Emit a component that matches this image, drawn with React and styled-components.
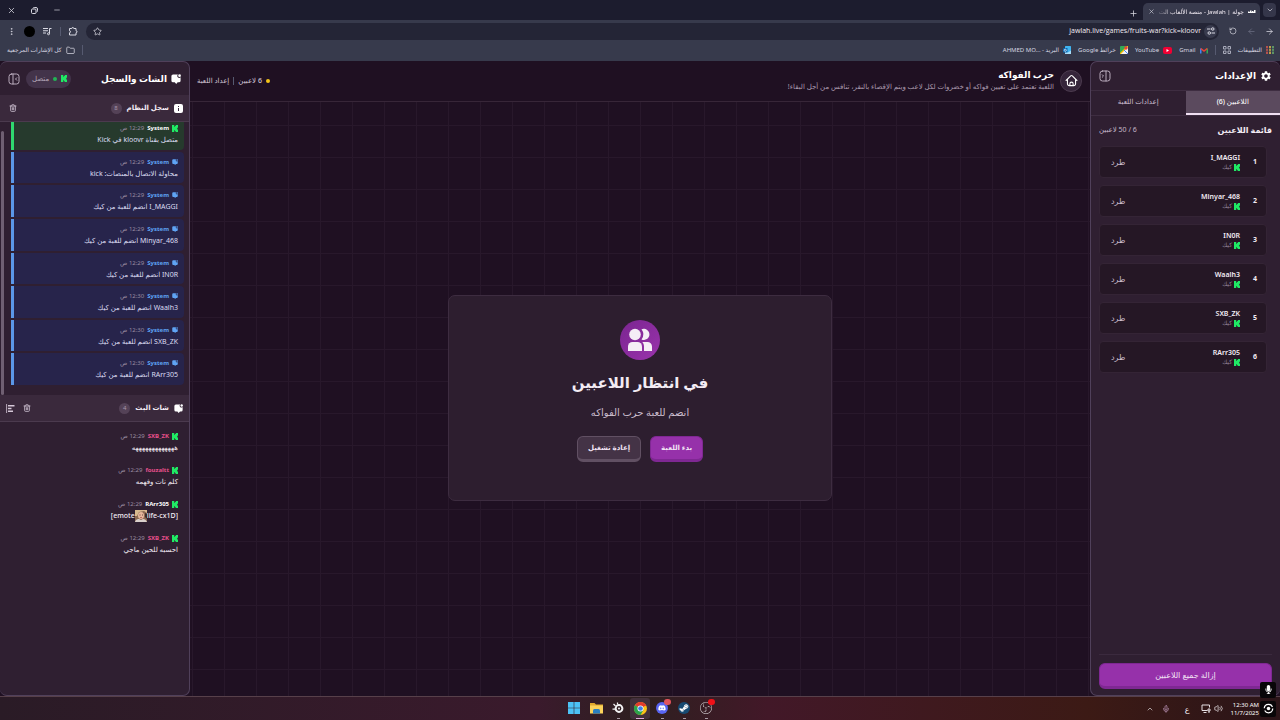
import React, { useState } from "react";
import styled, { createGlobalStyle, css } from "styled-components";
import {
  ArrowLeft,
  ArrowRight,
  ChevronDown,
  ChevronUp,
  EllipsisVertical,
  Folder,
  Mic,
  Minus,
  Plus,
  RotateCcw,
  Star,
  Trash2,
  Volume2,
  X,
} from "lucide-react";
import { MdSettings } from "react-icons/md";
import { FaDiscord, FaMicrophone, FaSteamSymbol } from "react-icons/fa";
import { SiObsstudio } from "react-icons/si";

const GlobalStyle = createGlobalStyle`
  * {
    box-sizing: border-box;
  }
  body {
    margin: 0;
    background: #1f1022;
    color: #f3ecf4;
    font-family: "Noto Sans", "DejaVu Sans", sans-serif;
    font-size: 8px;
    line-height: 12px;
  }
  button, input {
    font: inherit;
    color: inherit;
  }
  svg {
    display: block;
    flex: none;
  }
`;

/* ---------- shared ---------- */

const Page = styled.div`
  display: flex;
  flex-direction: column;
  height: 100vh;
  overflow: hidden;
`;

const IconButton = styled.button`
  display: inline-flex;
  align-items: center;
  justify-content: center;
  flex: none;
  width: ${({ $size }) => $size || 18}px;
  height: ${({ $size }) => $size || 18}px;
  padding: 0;
  border: 0;
  border-radius: 50%;
  background: ${({ $bg }) => $bg || "transparent"};
  color: ${({ $color }) => $color || "#d9d9e3"};
  cursor: pointer;
`;

const Spacer = styled.div`
  flex: 1;
`;

const Divider = styled.span`
  width: 1px;
  height: ${({ $h }) => $h || 10}px;
  margin: 0 ${({ $gap }) => $gap || 0}px;
  background: #565a70;
`;

/* ---------- browser ---------- */

const TabStrip = styled.div`
  display: flex;
  align-items: flex-end;
  height: 20px;
  padding: 0 4px 0 2px;
  background: #1c1c2e;
`;

const TabMenu = styled(IconButton)`
  align-self: center;
  width: 13px;
  height: 14px;
  border-radius: 4px;
  background: #35364a;
`;

const BrowserTab = styled.div`
  display: flex;
  align-items: center;
  gap: 4px;
  width: 117px;
  height: 17px;
  margin: 0 3px;
  padding: 0 4px;
  border-radius: 5px 5px 0 0;
  background: #383a4d;
  font-size: 6px;
`;

const TabTitle = styled.span`
  flex: 1;
  white-space: nowrap;
  mask-image: linear-gradient(to left, #000 80%, #0004);
`;

const WindowButtons = styled.div`
  display: flex;
  align-items: center;
  gap: 5px;
  height: 20px;
`;

const Toolbar = styled.div`
  display: flex;
  align-items: center;
  height: 22px;
  padding: 0 2px;
  background: #373a4c;
`;

const AddressBar = styled.form`
  display: flex;
  flex: 1;
  align-items: center;
  height: 17px;
  margin: 0 5px 0 6px;
  padding: 0 2px;
  border-radius: 9px;
  background: #242536;
`;

const AddressInput = styled.input`
  flex: 1;
  min-width: 0;
  padding: 0 3px 0 0;
  border: 0;
  outline: 0;
  background: transparent;
  font-family: "Open Sans", "Noto Sans", sans-serif;
  font-size: 7px;
  direction: ltr;
  text-align: right;
`;

const Avatar = styled(IconButton)`
  width: 11px;
  height: 11px;
  margin: 0 4px;
  background: #000;
`;

const Bookmarks = styled.nav`
  display: flex;
  align-items: center;
  gap: 7px;
  height: 19px;
  padding: 0 6px 3px 7px;
  background: #373a4c;
  color: #d5d6e0;
  font-size: 6px;
`;

const Bookmark = styled.a`
  display: flex;
  align-items: center;
  gap: 4px;
  color: inherit;
  text-decoration: none;
  white-space: nowrap;
`;

/* ---------- app layout ---------- */

const Main = styled.main`
  display: flex;
  flex: 1;
  min-height: 0;
`;

const Panel = styled.aside`
  display: flex;
  flex: 0 0 190px;
  flex-direction: column;
  min-width: 0;
  border: 1px solid #50405a;
  border-width: ${({ $side }) => ($side === "right" ? "1px 0 1px 1px" : "1px 1px 1px 0")};
  border-radius: 7px;
  background: #2f1f31;
  overflow: hidden;
`;

const PanelHeader = styled.header`
  display: flex;
  align-items: center;
  gap: 4px;
  height: ${({ $h }) => $h}px;
  padding: 0 8px;
`;

const PanelTitle = styled.h2`
  margin: 0;
  font-size: 9px;
  line-height: 16px;
  font-weight: 700;
  color: #fff;
`;

/* settings panel */

const Tabs = styled.div`
  display: grid;
  grid-template-columns: 1fr 1fr;
  border-top: 1px solid #3e2d41;
  border-bottom: 1px solid #3e2d41;
`;

const TabButton = styled.button`
  height: 24px;
  padding: 0;
  border: 0;
  border-bottom: 2px solid transparent;
  background: transparent;
  color: #cdbfd0;
  font-size: 7px;
  font-weight: 500;
  cursor: pointer;
  ${({ $active }) =>
    $active &&
    css`
      border-bottom-color: #f0dff2;
      background: #5b4a5e;
      color: #fff;
    `}
`;

const ListHeader = styled.div`
  display: flex;
  align-items: center;
  justify-content: space-between;
  height: 28px;
  padding: 0 8px;
`;

const ListTitle = styled.h3`
  margin: 0;
  font-size: 8px;
  font-weight: 700;
`;

const Count = styled.span`
  font-size: 7px;
  color: #c5b7c8;
`;

const Players = styled.ul`
  display: flex;
  flex: 1;
  flex-direction: column;
  gap: 7px;
  min-height: 0;
  margin: 0;
  padding: 2px 13px 0 8px;
  list-style: none;
`;

const Player = styled.li`
  display: flex;
  align-items: center;
  height: 32px;
  padding: 0 9px 0 11px;
  border: 1px solid #342435;
  border-radius: 4px;
  background: #251725;
`;

const Rank = styled.span`
  width: 17px;
  font-size: 7px;
  font-weight: 700;
`;

const PlayerInfo = styled.div`
  display: flex;
  flex: 1;
  flex-direction: column;
`;

const PlayerName = styled.span`
  font-size: 7px;
  line-height: 11px;
  font-weight: 600;
`;

const Platform = styled.span`
  display: flex;
  align-items: center;
  gap: 2px;
  color: #94859a;
  font-size: 6px;
  line-height: 9px;
`;

const KickButton = styled.button`
  padding: 0;
  border: 0;
  background: transparent;
  color: #cdbfd0;
  font-size: 8px;
  cursor: pointer;
`;

const PanelFooter = styled.footer`
  margin: 0 8px;
  padding: 8px 0 6px;
  border-top: 1px solid #3b2a3e;
`;

const Button = styled.button`
  height: 26px;
  padding: 0 10px;
  border: 1px solid ${({ $variant }) => ($variant === "ghost" ? "#615063" : "#7f2893")};
  border-bottom-width: 3px;
  border-radius: 6px;
  background: ${({ $variant }) => ($variant === "ghost" ? "#443346" : "#9631aa")};
  width: ${({ $wide }) => ($wide ? "100%" : "auto")};
  color: #f1e3f4;
  font-size: ${({ $wide }) => ($wide ? 8 : 7)}px;
  font-weight: ${({ $wide }) => ($wide ? 400 : 700)};
  cursor: pointer;
`;

/* centre */

const Centre = styled.section`
  display: flex;
  flex: 1;
  flex-direction: column;
  min-width: 0;
`;

const GameHeader = styled.header`
  display: flex;
  align-items: center;
  gap: 6px;
  height: 41px;
  padding: 0 8px 1px 7px;
  border-bottom: 1px solid #372638;
`;

const HomeLink = styled.a`
  display: flex;
  align-items: center;
  justify-content: center;
  width: 22px;
  height: 22px;
  border: 1px solid #4c3b4f;
  border-radius: 50%;
  background: #35253a;
  color: #fff;
`;

const GameTitle = styled.h1`
  margin: 0;
  font-size: 9px;
  line-height: 12px;
  font-weight: 700;
  color: #fff;
`;

const GameText = styled.p`
  margin: 0;
  color: #ab9bae;
  font-size: 7px;
  line-height: 12px;
`;

const Status = styled.div`
  display: flex;
  align-items: center;
  gap: 4px;
  font-size: 7px;
  font-weight: 500;
  color: #d3c6d6;
`;

const Dot = styled.span`
  width: 4px;
  height: 4px;
  border-radius: 50%;
  background: ${({ $color }) => $color};
`;

const Stage = styled.div`
  display: flex;
  flex: 1;
  align-items: center;
  justify-content: center;
  padding-bottom: 3px;
  background-image: linear-gradient(to right, #28182b 1px, transparent 1px),
    linear-gradient(to bottom, #28182b 1px, transparent 1px);
  background-size: 32px 32px;
  background-position: 2px 23px;
`;

const WaitCard = styled.div`
  display: flex;
  flex-direction: column;
  align-items: center;
  width: 384px;
  max-width: 100%;
  padding: 24px 24px 38px;
  border: 1px solid #3d2c40;
  border-radius: 7px;
  background: #2d1e2f;
`;

const UsersBadge = styled.div`
  width: 40px;
  height: 40px;
  border-radius: 50%;
  background: linear-gradient(135deg, #7a2590, #9a33ac);
`;

const WaitTitle = styled.h2`
  margin: 10px 0 0;
  font-size: 15px;
  line-height: 24px;
  font-weight: 700;
`;

const WaitText = styled.p`
  margin: 10px 0 0;
  color: #cbbdce;
  font-size: 10px;
  line-height: 16px;
`;

const Actions = styled.div`
  display: flex;
  gap: 9px;
  margin-top: 16px;
`;

/* chat panel */

const Connected = styled.span`
  display: flex;
  align-items: center;
  gap: 4px;
  height: 18px;
  padding: 0 4px 0 6px;
  margin-left: 2px;
  border-radius: 9px;
  background: #43334a;
  color: #b5a7b8;
  font-size: 7px;
`;

const SectionBar = styled.div`
  display: flex;
  flex: none;
  align-items: center;
  gap: 5px;
  height: 27px;
  padding: 0 6px 0 4px;
  border-bottom: 1px solid #4b3a4e;
  background: #3a293c;
`;

const SectionTitle = styled.h3`
  margin: 0;
  font-size: 7px;
  font-weight: 700;
`;

const Badge = styled.span`
  width: 11px;
  height: 11px;
  border-radius: 50%;
  background: #544257;
  color: #a896ab;
  font-size: 6px;
  line-height: 11px;
  text-align: center;
`;

const Log = styled.div`
  display: flex;
  flex: 0 0 273px;
  justify-content: space-between;
  overflow: hidden;
`;

const LogList = styled.ul`
  display: flex;
  flex: 1;
  flex-direction: column;
  gap: 2px;
  margin: -4px 5px 0 7px;
  padding: 0 0 10px;
  list-style: none;
`;

const LogEntry = styled.li`
  flex: 1;
  padding: 4px 6px 2px;
  border-left: 3px solid ${({ $ok }) => ($ok ? "#2fd96f" : "#5b97e8")};
  border-radius: 0 4px 4px 0;
  background: ${({ $ok }) => ($ok ? "#263a2d" : "#27244b")};
`;

const ScrollThumb = styled.div`
  width: 3px;
  margin: 9px 0 0 1px;
  border-radius: 2px;
  background: #6f5f72;
`;

const Meta = styled.div`
  display: flex;
  align-items: center;
  gap: 3px;
  font-size: 6px;
  line-height: 12px;
`;

const Author = styled.span`
  font-weight: 700;
  color: ${({ $color }) => $color};
`;

const Time = styled.time`
  color: #9a8ca0;
`;

const Message = styled.div`
  display: flex;
  align-items: center;
  font-size: 7px;
  font-weight: ${({ $bold }) => ($bold ? 500 : 400)};
  line-height: 12px;
  color: ${({ $bold }) => ($bold ? "#f3ecf4" : "#dcdcf2")};
`;

const Chat = styled.ul`
  display: flex;
  flex: 1;
  flex-direction: column;
  gap: 10px;
  margin: 0;
  padding: 8px 11px;
  list-style: none;
`;

/* ---------- taskbar ---------- */

const Taskbar = styled.footer`
  display: grid;
  grid-template-columns: 1fr auto 1fr;
  align-items: center;
  height: 24px;
  border-top: 1px solid #57404a;
  background: linear-gradient(to right, #2a1b26, #3a1a2c 42%, #2e2020 50%, #421828 60%, #3c1a15 85%, #2a1418);
`;

const Apps = styled.div`
  display: flex;
  gap: 2px;
`;

const TaskButton = styled.button`
  position: relative;
  display: flex;
  align-items: center;
  justify-content: center;
  width: 20px;
  height: 21px;
  padding: 0 0 1px;
  border: 0;
  border-radius: 3px;
  background: ${({ $active }) => ($active ? "#43303c" : "transparent")};
  &::after {
    content: "";
    position: absolute;
    bottom: 0;
    width: ${({ $active }) => ($active ? 8 : 3)}px;
    height: 1px;
    background: ${({ $active }) => ($active ? "#e3a8dc" : "#a89aa4")};
    display: ${({ $running }) => ($running ? "block" : "none")};
  }
`;

const RoundIcon = styled.span`
  display: flex;
  align-items: center;
  justify-content: center;
  width: 12px;
  height: 12px;
  border-radius: 50%;
  background: ${({ $bg }) => $bg};
  color: #fff;
`;

const Alert = styled.span`
  position: absolute;
  top: 1px;
  right: 1px;
  width: 7px;
  height: 6px;
  border-radius: 3px;
  background: ${({ $color }) => $color};
`;

const Tray = styled.div`
  display: flex;
  align-items: center;
  justify-content: flex-end;
  gap: 8px;
  padding-right: 4px;
`;

const Language = styled.span`
  padding: 0 3px 0 7px;
`;

const TrayPair = styled.span`
  display: flex;
  align-items: center;
  gap: 3px;
`;

const Clock = styled.time`
  font-size: 6px;
  line-height: 8px;
  text-align: right;
  color: #fff;
`;

const RecorderStack = styled.div`
  position: relative;
  display: flex;
  margin-left: -7px;
`;

const RecorderTile = styled(IconButton)`
  border-radius: 2px;
  width: 16px;
  height: 16px;
  background: #080608;
  color: #fff;
  ${({ $floating }) =>
    $floating &&
    css`
      position: absolute;
      bottom: 19px;
    `}
`;

/* ---------- drawings ---------- */

const Kick = () => (
  <svg width="6" height="7" viewBox="0 0 8 8" preserveAspectRatio="none" fill="#1fea64">
    <path d="M0 0h3v2h1V1h1V0h3v3H7v2h1v3H5V7H4V6H3v2H0z" />
  </svg>
);

const BubbleIcon = ({ size = 9, color = "#fff" }) => (
  <svg width={size} height={size} viewBox="0 0 24 24" fill={color}>
    <path d="M5 1h11.500a4.600 4.600 0 0 0 6.500 7V16a4 4 0 0 1-4 4h-3l-3.500 4L9 20H5a4 4 0 0 1-4-4V5a4 4 0 0 1 4-4z" />
    <circle cx="20.500" cy="4" r="3.200" />
  </svg>
);

const InfoIcon = () => (
  <svg width="9" height="9" viewBox="0 0 18 18">
    <rect width="18" height="18" rx="4" fill="#fff" />
    <path d="M9 8v6M9 4v2" stroke="#3a293c" strokeWidth="2" />
  </svg>
);

const CollapseIcon = ({ to }) => (
  <svg width="12" height="12" viewBox="0 0 24 24" fill="none" stroke="currentColor" strokeWidth="2" strokeLinecap="round" strokeLinejoin="round">
    <rect x="2" y="2" width="20" height="20" rx="5" />
    {to === "left" ? <path d="M10 2v20M17.500 9.500 15 12l2.500 2.500" /> : <path d="M14 2v20M6.500 9.500 9 12l-2.500 2.500" />}
  </svg>
);

const HouseIcon = () => (
  <svg width="13" height="13" viewBox="0 0 24 24" fill="none" stroke="currentColor" strokeWidth="2" strokeLinecap="round" strokeLinejoin="round">
    <path d="M2 12 10.500 3.500a2.200 2.200 0 0 1 3 0L22 12" />
    <path d="M4.500 10v8a3.500 3.500 0 0 0 3.500 3.500h8a3.500 3.500 0 0 0 3.500-3.500v-8" />
    <path d="M9 21v-3a3 3 0 0 1 6 0v3" />
  </svg>
);

const UsersIcon = () => (
  <svg width="40" height="40" viewBox="0 0 40 40" fill="#f5eef6">
    <circle cx="15" cy="14.500" r="5.800" />
    <path d="M21.500 9.300a5.600 5.600 0 1 1 0 10.200 8.500 8.500 0 0 0 0-10.200z" />
    <path d="M8 31v-4.500a4.500 4.500 0 0 1 4.500-4.500h5a4.500 4.500 0 0 1 4.500 4.500V31z" />
    <path d="M22.300 22h5.200a4.500 4.500 0 0 1 4.500 4.500V31h-8v-4.500c0-1.800-.6-3.300-1.700-4.500z" />
  </svg>
);

const ExtensionIcon = () => (
  <svg width="10" height="10" viewBox="0 0 20 20" fill="none" stroke="currentColor" strokeWidth="2" strokeLinejoin="round">
    <path d="M3 5h4.500a2 2 0 1 1 4 0H16v4.500a2 2 0 1 1 0 4V18H3v-4.500a2 2 0 1 0 0-4z" />
  </svg>
);

const SiteInfoIcon = () => (
  <svg width="8" height="8" viewBox="0 0 16 16" fill="none" stroke="currentColor" strokeWidth="2">
    <path d="M0 4h7M9 12h7" />
    <circle cx="11.500" cy="4" r="2.500" />
    <circle cx="4.500" cy="12" r="2.500" />
  </svg>
);

const QueueIcon = () => (
  <svg width="9" height="9" viewBox="0 0 18 18" fill="none" stroke="currentColor" strokeWidth="2">
    <path d="M0 3h10M0 7.500h10M0 12h6" />
    <path d="M13 13V3h4" />
    <circle cx="11" cy="13.500" r="2" />
  </svg>
);

const AlignIcon = () => (
  <svg width="9" height="9" viewBox="0 0 18 18" fill="none" stroke="#d5c8d8" strokeWidth="3">
    <path d="M1.200 0v18" strokeWidth="1.600" />
    <path d="M4 3.500h13M4 9h7M4 14.500h10" />
  </svg>
);

const AppsIcon = () => (
  <svg width="8" height="8" viewBox="0 0 8 8">
    <path d="M1 0v8" stroke="#e05a4f" strokeWidth="1.500" />
    <path d="M4 0v8" stroke="#e9c04a" strokeWidth="1.500" />
    <path d="M7 0v8" stroke="#6bb56e" strokeWidth="1.500" />
    <path d="M0 2.600h8M0 5.300h8" stroke="#373a4c" strokeWidth=".7" />
  </svg>
);

const GroupsIcon = () => (
  <svg width="8" height="8" viewBox="0 0 16 16" fill="none" stroke="#a9abba" strokeWidth="2">
    <path d="M1 1h5v5H1zM10 1h5v5h-5zM1 10h5v5H1zM10 10h5v5h-5z" />
  </svg>
);

const GmailIcon = () => (
  <svg width="8" height="7" viewBox="0 0 16 12" fill="none" strokeWidth="3">
    <path d="M1.500 12V2" stroke="#4285f4" />
    <path d="M14.500 12V2" stroke="#34a853" />
    <path d="M1.500 2 8 7l6.500-5" stroke="#ea4335" />
  </svg>
);

const YoutubeIcon = () => (
  <svg width="9" height="7" viewBox="0 0 18 14">
    <rect width="18" height="14" rx="4" fill="#f00033" />
    <path d="M7 4v6l5-3z" fill="#fff" />
  </svg>
);

const MapsIcon = () => (
  <svg width="8" height="8" viewBox="0 0 16 16">
    <rect width="16" height="16" rx="2" fill="#34a853" />
    <path d="M0 16 16 0v16z" fill="#f2f2f2" />
    <path d="M0 16 16 0" stroke="#fbbc04" strokeWidth="2.500" />
    <path d="M8 8l8 8" stroke="#4285f4" strokeWidth="2" />
    <circle cx="12" cy="4" r="3.500" fill="#ea4335" />
  </svg>
);

const OutlookIcon = () => (
  <svg width="8" height="8" viewBox="0 0 16 16">
    <rect x="4" width="12" height="15" rx="1" fill="#3fb4f0" />
    <path d="M4 9l6 4 6-4v7H4z" fill="#a8dcf8" />
    <rect y="4" width="9" height="9" rx="1" fill="#0a64ad" />
    <circle cx="4.500" cy="8.500" r="2.200" fill="none" stroke="#fff" strokeWidth="1.400" />
  </svg>
);

const RestoreIcon = () => (
  <svg width="7" height="7" viewBox="0 0 14 14" fill="none" stroke="currentColor" strokeWidth="2">
    <rect x="1" y="4" width="9" height="9" rx="2" />
    <path d="M4 2.500C4.500 1.500 5 1 6.500 1H10a3 3 0 0 1 3 3v3.500c0 1.500-.5 2-1.500 2.500" />
  </svg>
);

const SiteIcon = () => (
  <svg width="8" height="5" viewBox="0 0 16 8" fill="#fff">
    <path d="M0 4h3v3H0zM4 2h3v5H4zM8 3h3v4H8zM12 1h3v6h-3zM1 5h14v2H1z" />
  </svg>
);

const Emote = () => (
  <svg width="12" height="12" viewBox="0 0 12 12">
    <rect width="12" height="12" fill="#8c6a52" />
    <path d="M0 0h12v3L9 1 4 2 2 6H0z" fill="#d8b98f" />
    <ellipse cx="6" cy="5.500" rx="3" ry="3.600" fill="#e6b79c" />
    <path d="M4.500 5h1M7 5h1" stroke="#4a2e28" strokeWidth=".8" />
    <path d="M5 7.500h2" stroke="#a3504a" strokeWidth=".7" />
    <path d="M0 12c1-3 3-3 4-3l2 1 2-1c2 0 3 1 4 3z" fill="#d9d0cc" />
    <path d="M10 3l2 1v5l-2-2z" fill="#3c2b2a" />
  </svg>
);

const WindowsIcon = () => (
  <svg width="12" height="12" viewBox="0 0 12 12" fill="#4cc2f5">
    <path d="M0 0h5.700v5.700H0zM6.300 0H12v5.700H6.300zM0 6.300h5.700V12H0zM6.300 6.300H12V12H6.300z" />
  </svg>
);

const FilesIcon = () => (
  <svg width="13" height="12" viewBox="0 0 26 24">
    <path d="M0 2h9l3 3h14v5H0z" fill="#e0a92c" />
    <path d="M0 7h26v16H0z" fill="#fbd35b" />
    <path d="M6 23v-6a3 3 0 0 1 3-3h8a3 3 0 0 1 3 3v6z" fill="#2a7fc0" />
  </svg>
);

const SteelIcon = () => (
  <svg width="12" height="12" viewBox="0 0 24 24" fill="none" stroke="#f4f4f4">
    <circle cx="14" cy="13" r="6.800" strokeWidth="4" />
    <circle cx="14" cy="13" r="2" fill="#f4f4f4" stroke="none" />
    <path d="M11 5V1M3 4l4 4M6 14H1" strokeWidth="2.500" />
  </svg>
);

const ChromeIcon = () => (
  <svg width="13" height="13" viewBox="0 0 24 24">
    <circle cx="12" cy="12" r="12" fill="#fbc116" />
    <path d="M12 12 1.600 6a12 12 0 0 1 20.800 0z" fill="#e33b2e" />
    <path d="M1.600 6A12 12 0 0 0 12 24l5.200-9L12 12z" fill="#2ba24c" />
    <path d="M12 6.500h10.700L22 5H9z" fill="#e33b2e" />
    <circle cx="12" cy="12" r="5.600" fill="#fff" />
    <circle cx="12" cy="12" r="4.300" fill="#3f7ee8" />
  </svg>
);

const NetworkIcon = () => (
  <svg width="10" height="9" viewBox="0 0 20 18" fill="none" stroke="#e6dfe3" strokeWidth="2">
    <path d="M13 13H2V2h15v5M5 17h6M14 10h4v4h-4zM16 14v4" />
  </svg>
);

const RecordIcon = () => (
  <svg width="11" height="11" viewBox="0 0 22 22" fill="none" stroke="#fff" strokeWidth="2.500">
    <circle cx="11" cy="11" r="8.500" strokeDasharray="22 4.700" />
    <circle cx="11" cy="11" r="3.500" fill="#fff" stroke="none" />
  </svg>
);

/* ---------- data ---------- */

const players = ["I_MAGGI", "Minyar_468", "IN0R", "Waalh3", "SXB_ZK", "RArr305"];

const systemLog = [
  { time: "12:29 ص", text: "متصل بقناة kloovr في Kick", ok: true },
  { time: "12:29 ص", text: "محاولة الاتصال بالمنصات: kick" },
  { time: "12:29 ص", text: "I_MAGGI انضم للعبة من كيك" },
  { time: "12:29 ص", text: "Minyar_468 انضم للعبة من كيك" },
  { time: "12:29 ص", text: "IN0R انضم للعبة من كيك" },
  { time: "12:30 ص", text: "Waalh3 انضم للعبة من كيك" },
  { time: "12:30 ص", text: "SXB_ZK انضم للعبة من كيك" },
  { time: "12:30 ص", text: "RArr305 انضم للعبة من كيك" },
];

const chatMessages = [
  { author: "SXB_ZK", color: "#e8508c", text: "هههههههههههههه" },
  { author: "fouzaltt", color: "#e8508c", text: "كلم نات وفهمه" },
  { author: "RArr305", color: "#ffffff", emote: true },
  { author: "SXB_ZK", color: "#e8508c", text: "احسبه للحين ماجي" },
];

/* ---------- parts ---------- */

const Browser = () => (
  <>
    <TabStrip>
      <TabMenu aria-label="البحث في علامات التبويب"><ChevronDown size={8} /></TabMenu>
      <BrowserTab>
        <SiteIcon />
        <TabTitle>جولة | Jawlah - منصة الألعاب الت</TabTitle>
        <IconButton $size={8} aria-label="إغلاق علامة التبويب"><X size={7} /></IconButton>
      </BrowserTab>
      <IconButton $size={14} aria-label="علامة تبويب جديدة"><Plus size={9} /></IconButton>
      <Spacer />
      <WindowButtons>
        <IconButton aria-label="تصغير"><Minus size={8} /></IconButton>
        <IconButton aria-label="استعادة"><RestoreIcon /></IconButton>
        <IconButton aria-label="إغلاق"><X size={9} /></IconButton>
      </WindowButtons>
    </TabStrip>
    <Toolbar>
      <IconButton aria-label="رجوع"><ArrowRight size={9} /></IconButton>
      <IconButton $color="#6b6e82" aria-label="تقدم"><ArrowLeft size={9} /></IconButton>
      <IconButton aria-label="إعادة التحميل"><RotateCcw size={8} /></IconButton>
      <AddressBar>
        <IconButton type="button" $size={13} $bg="#393b4e" aria-label="معلومات الموقع"><SiteInfoIcon /></IconButton>
        <AddressInput aria-label="العنوان" defaultValue="jawlah.live/games/fruits-war?kick=kloovr" />
        <IconButton type="button" aria-label="إضافة إشارة"><Star size={9} /></IconButton>
      </AddressBar>
      <IconButton $size={14} aria-label="الإضافات"><ExtensionIcon /></IconButton>
      <Divider $h={9} $gap={5} />
      <IconButton $size={16} aria-label="التحكم في الوسائط"><QueueIcon /></IconButton>
      <Avatar aria-label="الملف الشخصي" />
      <IconButton aria-label="القائمة"><EllipsisVertical size={9} /></IconButton>
    </Toolbar>
    <Bookmarks>
      <Bookmark href="#apps"><AppsIcon />التطبيقات</Bookmark>
      <GroupsIcon />
      <Divider />
      <Bookmark href="#gmail"><GmailIcon />Gmail</Bookmark>
      <Bookmark href="#youtube"><YoutubeIcon />YouTube</Bookmark>
      <Bookmark href="#maps"><MapsIcon />خرائط Google</Bookmark>
      <Bookmark href="#mail"><OutlookIcon /><span>البريد - <bdi>AHMED MO...</bdi></span></Bookmark>
      <Spacer />
      <Divider />
      <Bookmark href="#all"><Folder size={9} />كل الإشارات المرجعية</Bookmark>
    </Bookmarks>
  </>
);

const Settings = () => {
  const [tab, setTab] = useState("players");
  return (
    <Panel $side="right">
      <PanelHeader $h={28}>
        <MdSettings size={12} color="#fff" />
        <PanelTitle>الإعدادات</PanelTitle>
        <Spacer />
        <IconButton $size={12} $color="#b9abbc" aria-label="طي الإعدادات"><CollapseIcon to="right" /></IconButton>
      </PanelHeader>
      <Tabs role="tablist">
        <TabButton role="tab" aria-selected={tab === "players"} $active={tab === "players"} onClick={() => setTab("players")}>
          اللاعبين (6)
        </TabButton>
        <TabButton role="tab" aria-selected={tab === "game"} $active={tab === "game"} onClick={() => setTab("game")}>
          إعدادات اللعبة
        </TabButton>
      </Tabs>
      <ListHeader>
        <ListTitle>قائمة اللاعبين</ListTitle>
        <Count>6 / 50 لاعبين</Count>
      </ListHeader>
      <Players>
        {players.map((name, index) => (
          <Player key={name}>
            <Rank>{index + 1}</Rank>
            <PlayerInfo>
              <PlayerName>{name}</PlayerName>
              <Platform><Kick />كيك</Platform>
            </PlayerInfo>
            <KickButton>طرد</KickButton>
          </Player>
        ))}
      </Players>
      <PanelFooter>
        <Button $wide>إزالة جميع اللاعبين</Button>
      </PanelFooter>
    </Panel>
  );
};

const Game = () => (
  <Centre>
    <GameHeader>
      <HomeLink href="#home" aria-label="الرئيسية"><HouseIcon /></HomeLink>
      <div>
        <GameTitle>حرب الفواكه</GameTitle>
        <GameText>اللعبة تعتمد على تعيين فواكه أو خضروات لكل لاعب ويتم الإقصاء بالنقر، تنافس من أجل البقاء!</GameText>
      </div>
      <Spacer />
      <Status>
        <Dot $color="#f5c518" />
        <span>6 لاعبين</span>
        <Divider $h={8} />
        <span>إعداد اللعبة</span>
      </Status>
    </GameHeader>
    <Stage>
      <WaitCard>
        <UsersBadge><UsersIcon /></UsersBadge>
        <WaitTitle>في انتظار اللاعبين</WaitTitle>
        <WaitText>انضم للعبة حرب الفواكه</WaitText>
        <Actions>
          <Button>بدء اللعبة</Button>
          <Button $variant="ghost">إعادة تشغيل</Button>
        </Actions>
      </WaitCard>
    </Stage>
  </Centre>
);

const ChatPanel = () => (
  <Panel $side="left">
    <PanelHeader $h={33}>
      <BubbleIcon size={10} />
      <PanelTitle>الشات والسجل</PanelTitle>
      <Spacer />
      <Connected>
        <Kick />
        <Dot $color="#22b455" />
        متصل
      </Connected>
      <IconButton $size={12} $color="#b9abbc" aria-label="طي الشات"><CollapseIcon to="left" /></IconButton>
    </PanelHeader>
    <SectionBar>
      <InfoIcon />
      <SectionTitle>سجل النظام</SectionTitle>
      <Badge>8</Badge>
      <Spacer />
      <IconButton $color="#b9abbc" aria-label="مسح السجل"><Trash2 size={8} strokeWidth={3} /></IconButton>
    </SectionBar>
    <Log>
      <LogList>
        {systemLog.map((entry, index) => (
          <LogEntry key={index} $ok={entry.ok}>
            <Meta>
              {entry.ok ? <Kick /> : <BubbleIcon size={6} color="#5fa4f5" />}
              <Author $color={entry.ok ? "#fff" : "#5fa4f5"}>System</Author>
              <Time>{entry.time}</Time>
            </Meta>
            <Message><span>{entry.text}</span></Message>
          </LogEntry>
        ))}
      </LogList>
      <ScrollThumb />
    </Log>
    <SectionBar>
      <BubbleIcon />
      <SectionTitle>شات البث</SectionTitle>
      <Badge>4</Badge>
      <Spacer />
      <IconButton $size={12} $color="#b9abbc" aria-label="مسح الشات"><Trash2 size={8} strokeWidth={3} /></IconButton>
      <IconButton $size={12} aria-label="محاذاة"><AlignIcon /></IconButton>
    </SectionBar>
    <Chat>
      {chatMessages.map((message, index) => (
        <li key={index}>
          <Meta>
            <Kick />
            <Author $color={message.color}>{message.author}</Author>
            <Time>12:29 ص</Time>
          </Meta>
          {message.emote ? (
            <Message $bold><span dir="ltr">life-cx1D]</span><Emote /><span dir="ltr">[emote</span></Message>
          ) : (
            <Message $bold>{message.text}</Message>
          )}
        </li>
      ))}
    </Chat>
  </Panel>
);

const App = () => (
  <Page dir="rtl">
    <GlobalStyle />
    <Browser />
    <Main>
      <Settings />
      <Game />
      <ChatPanel />
    </Main>
    <Taskbar dir="ltr">
      <span />
      <Apps>
        <TaskButton aria-label="Start"><WindowsIcon /></TaskButton>
        <TaskButton aria-label="Files"><FilesIcon /></TaskButton>
        <TaskButton $running aria-label="GG"><SteelIcon /></TaskButton>
        <TaskButton $running $active aria-label="Chrome"><ChromeIcon /></TaskButton>
        <TaskButton $running aria-label="Discord">
          <RoundIcon $bg="#5865f2"><FaDiscord size={8} /></RoundIcon>
          <Alert $color="#e0525c" />
        </TaskButton>
        <TaskButton $running aria-label="Steam">
          <RoundIcon $bg="#174a72"><FaSteamSymbol size={10} /></RoundIcon>
        </TaskButton>
        <TaskButton $running aria-label="OBS">
          <SiObsstudio size={12} color="#d5d0d3" />
          <Alert $color="#f01018" />
        </TaskButton>
      </Apps>
      <Tray>
        <ChevronUp size={8} color="#e6dfe3" />
        <Mic size={8} color="#c79fc4" />
        <Language>ع</Language>
        <TrayPair>
          <NetworkIcon />
          <Volume2 size={9} color="#e6dfe3" />
        </TrayPair>
        <Clock>12:30 AM<br />11/7/2025</Clock>
        <RecorderStack>
          <RecorderTile $floating aria-label="Microphone"><FaMicrophone size={9} /></RecorderTile>
          <RecorderTile aria-label="Record"><RecordIcon /></RecorderTile>
        </RecorderStack>
      </Tray>
    </Taskbar>
  </Page>
);

export default App;
